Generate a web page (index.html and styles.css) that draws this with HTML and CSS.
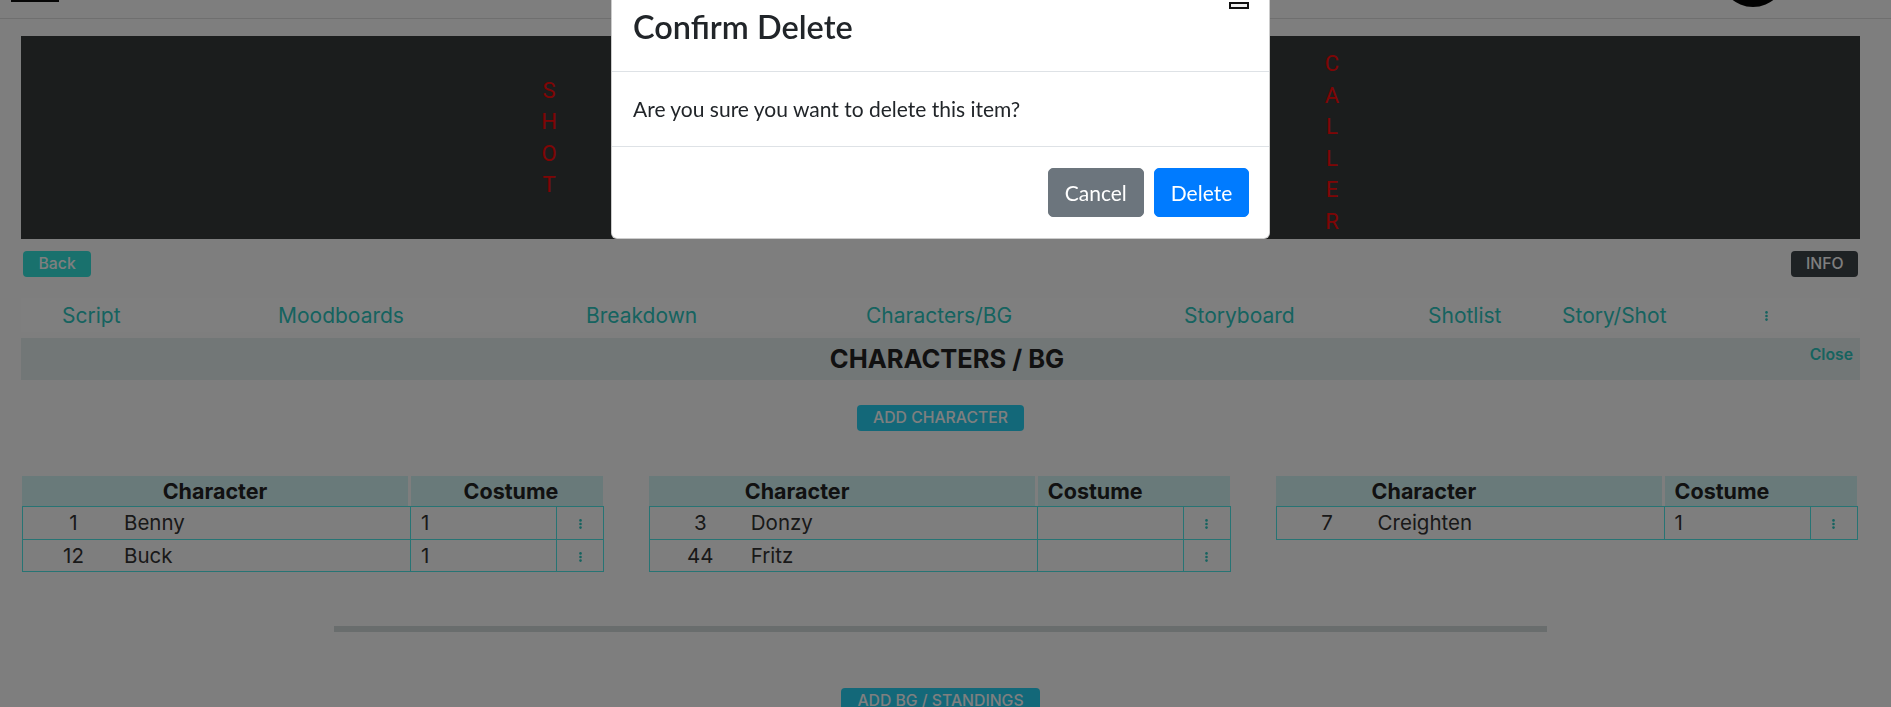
FILE: index.html
```html
<!DOCTYPE html>
<html lang="en">
<head>
<meta charset="utf-8">
<title>Characters / BG</title>
<link rel="stylesheet" href="styles.css">
</head>
<body>
<header class="topbar">
  <div class="brand"></div>
  <div class="avatar"></div>
</header>

<main class="page">
  <section class="banner">
    <div class="vword vword-shot"><span>S</span><span>H</span><span>O</span><span>T</span></div>
    <div class="banner-mid"></div>
    <div class="vword vword-caller"><span>C</span><span>A</span><span>L</span><span>L</span><span>E</span><span>R</span></div>
  </section>

  <div class="actions">
    <button class="btn btn-back">Back</button>
    <button class="btn btn-info">INFO</button>
  </div>

  <nav class="tabs">
    <a class="tab">Script</a>
    <a class="tab">Moodboards</a>
    <a class="tab">Breakdown</a>
    <a class="tab">Characters/BG</a>
    <a class="tab">Storyboard</a>
    <a class="tab">Shotlist</a>
    <a class="tab">Story/Shot</a>
    <span class="kebab"><svg width="3" height="10" viewBox="0 0 3 10"><circle cx="1.5" cy="1.4" r="1.3"/><circle cx="1.5" cy="5" r="1.3"/><circle cx="1.5" cy="8.6" r="1.3"/></svg></span>
  </nav>

  <div class="section-head">
    <h2 class="section-title">CHARACTERS / BG</h2>
    <a class="close-link">Close</a>
  </div>

  <div class="center-row"><button class="btn btn-add">ADD CHARACTER</button></div>

  <div class="tables">
    <table class="roster">
      <colgroup><col class="col-char"><col class="col-cost"><col class="col-menu"></colgroup>
      <thead><tr><th class="th-char">Character</th><th class="th-cost" colspan="2">Costume</th></tr></thead>
      <tbody>
        <tr><td class="td-char"><span class="num">1</span><span class="name">Benny</span></td><td class="td-cost">1</td><td class="td-menu"><svg width="3" height="10" viewBox="0 0 3 10"><circle cx="1.5" cy="1.4" r="1.3"/><circle cx="1.5" cy="5" r="1.3"/><circle cx="1.5" cy="8.6" r="1.3"/></svg></td></tr>
        <tr><td class="td-char"><span class="num">12</span><span class="name">Buck</span></td><td class="td-cost">1</td><td class="td-menu"><svg width="3" height="10" viewBox="0 0 3 10"><circle cx="1.5" cy="1.4" r="1.3"/><circle cx="1.5" cy="5" r="1.3"/><circle cx="1.5" cy="8.6" r="1.3"/></svg></td></tr>
      </tbody>
    </table>
    <table class="roster roster-left">
      <colgroup><col class="col-char"><col class="col-cost"><col class="col-menu"></colgroup>
      <thead><tr><th class="th-char">Character</th><th class="th-cost" colspan="2">Costume</th></tr></thead>
      <tbody>
        <tr><td class="td-char"><span class="num">3</span><span class="name">Donzy</span></td><td class="td-cost"></td><td class="td-menu"><svg width="3" height="10" viewBox="0 0 3 10"><circle cx="1.5" cy="1.4" r="1.3"/><circle cx="1.5" cy="5" r="1.3"/><circle cx="1.5" cy="8.6" r="1.3"/></svg></td></tr>
        <tr><td class="td-char"><span class="num">44</span><span class="name">Fritz</span></td><td class="td-cost"></td><td class="td-menu"><svg width="3" height="10" viewBox="0 0 3 10"><circle cx="1.5" cy="1.4" r="1.3"/><circle cx="1.5" cy="5" r="1.3"/><circle cx="1.5" cy="8.6" r="1.3"/></svg></td></tr>
      </tbody>
    </table>
    <table class="roster roster-left">
      <colgroup><col class="col-char"><col class="col-cost"><col class="col-menu"></colgroup>
      <thead><tr><th class="th-char">Character</th><th class="th-cost" colspan="2">Costume</th></tr></thead>
      <tbody>
        <tr><td class="td-char"><span class="num">7</span><span class="name">Creighten</span></td><td class="td-cost">1</td><td class="td-menu"><svg width="3" height="10" viewBox="0 0 3 10"><circle cx="1.5" cy="1.4" r="1.3"/><circle cx="1.5" cy="5" r="1.3"/><circle cx="1.5" cy="8.6" r="1.3"/></svg></td></tr>
      </tbody>
    </table>
  </div>

  <div class="divider"></div>

  <div class="center-row center-row-bg"><button class="btn btn-add">ADD BG / STANDINGS</button></div>
</main>

<div class="backdrop"></div>

<div class="modal" role="dialog" aria-labelledby="modal-title">
  <div class="modal-header">
    <h4 class="modal-title" id="modal-title">Confirm Delete</h4>
    <button class="modal-close" aria-label="Close"></button>
  </div>
  <div class="modal-body">
    <p>Are you sure you want to delete this item?</p>
  </div>
  <div class="modal-footer">
    <button class="mbtn mbtn-cancel">Cancel</button>
    <button class="mbtn mbtn-delete">Delete</button>
  </div>
</div>
</body>
</html>
```

FILE: styles.css
```css
* { box-sizing: border-box; }

html, body {
  margin: 0;
  height: 100%;
}

body {
  font-family: Inter, "Liberation Sans", sans-serif;
  font-size: 21px;
  line-height: 1.5;
  color: #333;
  background: #fdfdfd;
  overflow: hidden;
}

/* ---------- top bar ---------- */
.topbar {
  height: 19px;
  border-bottom: 1px solid #dedede;
  display: flex;
  justify-content: space-between;
  align-items: flex-end;
  padding: 0 105px 0 11px;
  overflow: hidden;
}

.brand {
  flex: none;
  width: 48px;
  height: 40px;
  margin-bottom: 16px;
  background: #0c0c0c;
}

.avatar {
  flex: none;
  width: 66px;
  height: 66px;
  margin-bottom: 11px;
  border-radius: 50%;
  background: #050505;
}

/* ---------- page ---------- */
.page {
  padding: 17px 31px 0 21px;
}

.banner {
  height: 203px;
  background: #373b3b;
  display: flex;
  justify-content: center;
  align-items: center;
}

.vword {
  width: 30px;
  display: flex;
  flex-direction: column;
  align-items: center;
  font-family: Roboto, "Liberation Sans", sans-serif;
  font-size: 22px;
  line-height: 31.5px;
  color: #ff0a0a;
}

.vword-caller {
  align-self: flex-end;
  margin-bottom: 2px;
}

.banner-mid {
  width: 753px;
  height: 100%;
}

/* ---------- buttons ---------- */
.btn {
  font-family: Inter, "Liberation Sans", sans-serif;
  font-size: 15.75px;
  font-weight: 500;
  line-height: 22px;
  padding: 2px 15px;
  border: 0;
  border-radius: 4px;
  color: #fff;
  cursor: pointer;
}

.actions {
  margin-top: 12px;
  padding: 0 2px;
  display: flex;
  justify-content: space-between;
}

.btn-back { background: #32e2da; padding: 2px 15.5px; }
.btn-info { background: #3d4449; padding: 2px 14.5px; }

/* ---------- tabs ---------- */
.tabs {
  margin-top: 21px;
  height: 34px;
  padding: 2px 0 0 41px;
  background: #fff;
  display: grid;
  grid-template-columns: 216px 308px 280px 318px 244px 134px 202px auto;
  align-items: center;
}

.tab {
  color: #2cc6bf;
  line-height: 31.5px;
}

.kebab {
  display: flex;
  align-items: center;
  fill: #2cc6bf;
  padding-left: 1px;
}

/* ---------- section head ---------- */
.section-head {
  margin-top: 6px;
  height: 42px;
  background: #e4eeee;
  display: grid;
  grid-template-columns: 1fr auto 1fr;
}

.section-title {
  grid-column: 2;
  margin: 0;
  padding-left: 13px;
  font-size: 25.5px;
  font-weight: 700;
  line-height: 42px;
  color: #222;
}

.close-link {
  grid-column: 3;
  justify-self: end;
  align-self: start;
  margin: 5px 7px 0 0;
  font-size: 15.75px;
  font-weight: 600;
  line-height: 23px;
  color: #2cc6bf;
}

.center-row {
  display: flex;
  justify-content: center;
  margin-top: 25px;
}

.btn-add { background: #27d0f2; padding: 2px 16px; }

/* ---------- tables ---------- */
.tables {
  margin-top: 45px;
  height: 96px;
  padding: 0 2.4px 0 1px;
  display: flex;
  justify-content: space-between;
  align-items: flex-start;
}

.roster {
  width: 582px;
  table-layout: fixed;
  border-collapse: separate;
  border-spacing: 0;
}

.col-char { width: 389px; }
.col-cost { width: 146px; }
.col-menu { width: 47px; }

.roster th {
  height: 30px;
  padding: 0;
  font-size: 21.5px;
  font-weight: 700;
  line-height: 30px;
  color: #222;
  background: #d2f4f4;
  text-align: center;
}

.roster .th-char { border-right: 3px solid #fdfdfd; }
.roster .th-cost { border-right: 1px solid #fdfdfd; padding-left: 8px; }

.roster-left .th-char { text-align: left; padding-left: 96px; }
.roster-left .th-cost { text-align: left; padding-left: 10px; }

.roster td {
  padding: 0;
  height: 32.5px;
  line-height: 31.5px;
  font-size: 20.5px;
  color: #333;
  border-right: 1px solid #4ee8e8;
  border-bottom: 1px solid #4ee8e8;
  white-space: nowrap;
}

.roster tbody tr:first-child td { border-top: 1px solid #4ee8e8; }
.roster td:first-child { border-left: 1px solid #4ee8e8; }

.num {
  display: inline-block;
  width: 101px;
  text-align: center;
}

.td-cost { padding-left: 10px !important; }

.td-menu {
  text-align: center;
  fill: #2cc6bf;
}

.td-menu svg { vertical-align: middle; }

.divider {
  margin: 54px auto 0;
  width: 1213px;
  height: 6px;
  background: #d2dada;
}

.center-row-bg { margin-top: 56px; }

/* ---------- modal ---------- */
.backdrop {
  position: fixed;
  inset: 0;
  background: rgba(0, 0, 0, 0.5);
  z-index: 1;
}

.modal {
  position: fixed;
  left: 611px;
  top: -19px;
  width: 659px;
  z-index: 2;
  background: #fff;
  border: 1px solid rgba(0, 0, 0, 0.2);
  border-radius: 6px;
  font-family: Lato, "Open Sans", sans-serif;
  font-size: 21px;
  line-height: 1.5;
  color: #212529;
}

.modal-header {
  display: flex;
  justify-content: space-between;
  align-items: flex-start;
  padding: 21px;
  border-bottom: 1px solid #dee2e6;
}

.modal-title {
  margin: 0;
  font-size: 32.5px;
  font-weight: 600;
  line-height: 47.25px;
}

.modal-close {
  width: 20px;
  height: 7px;
  margin: -1px -1px 0 0;
  padding: 0;
  border: 2px solid #111;
  background: #f0f0f0;
}

.modal-body {
  padding: 21px;
}

.modal-body p { margin: 0; }

.modal-footer {
  display: flex;
  justify-content: flex-end;
  align-items: center;
  padding: 15.75px 14.75px 15.75px 15.75px;
  border-top: 1px solid #dee2e6;
}

.mbtn {
  margin: 5.25px;
  font-family: Lato, "Open Sans", sans-serif;
  font-size: 21px;
  line-height: 1.5;
  padding: 7.875px 15.75px;
  border: 1px solid transparent;
  border-radius: 5px;
  color: #fff;
}

.mbtn-cancel { background: #6c757d; border-color: #6c757d; }
.mbtn-delete { background: #007bff; border-color: #007bff; }
```
